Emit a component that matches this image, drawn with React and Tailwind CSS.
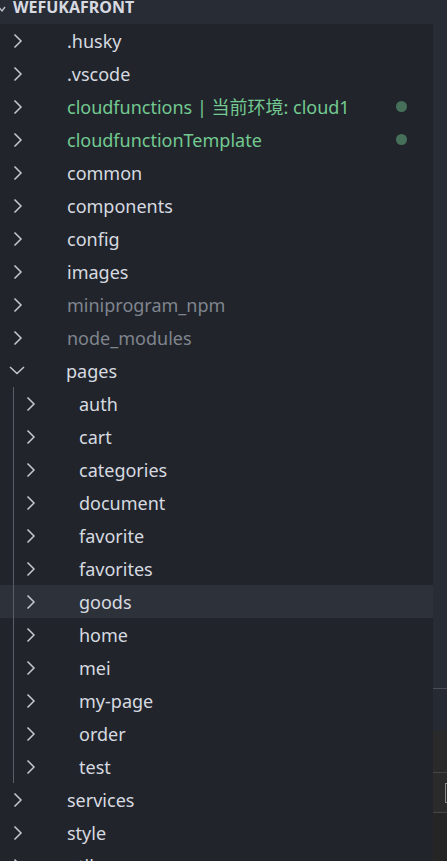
import { Fragment } from 'react';

const FONT = { fontFamily: '"Noto Sans", "Noto Sans CJK SC", sans-serif' };

const rows = [
  { name: '.husky' },
  { name: '.vscode' },
  { name: 'cloudfunctions | 当前环境: cloud1', tone: 'green', dot: true },
  { name: 'cloudfunctionTemplate', tone: 'green', dot: true },
  { name: 'common' },
  { name: 'components' },
  { name: 'config' },
  { name: 'images' },
  { name: 'miniprogram_npm', tone: 'dim' },
  { name: 'node_modules', tone: 'dim' },
  { name: 'pages', open: true },
  { name: 'auth', child: true },
  { name: 'cart', child: true },
  { name: 'categories', child: true },
  { name: 'document', child: true },
  { name: 'favorite', child: true },
  { name: 'favorites', child: true },
  { name: 'goods', child: true, hover: true },
  { name: 'home', child: true },
  { name: 'mei', child: true },
  { name: 'my-page', child: true },
  { name: 'order', child: true },
  { name: 'test', child: true },
  { name: 'services' },
  { name: 'style' },
  { name: 'utils' },
];

function ChevronRight() {
  return (
    <svg width="10" height="16" viewBox="0 0 10 16" fill="none">
      <path d="M1.5 1.5 L8 8 L1.5 14.5" stroke="#c5c8ce" strokeWidth="1.5" />
    </svg>
  );
}

function ChevronDown() {
  return (
    <svg width="16" height="9" viewBox="0 0 16 9" fill="none">
      <path d="M1 1 L8 7.5 L15 1" stroke="#c5c8ce" strokeWidth="1.5" />
    </svg>
  );
}

function Row({ row }) {
  const color =
    row.tone === 'green' ? 'text-[#73c991]' : row.tone === 'dim' ? 'text-[#7f848e]' : 'text-[#d7dae0]';
  return (
    <div className={`relative flex h-[33px] items-center ${row.hover ? 'bg-[#2c313a]' : ''}`}>
      {row.child && <div className="absolute left-[13px] top-0 h-full w-px bg-[#5a5e66]" />}
      <div className={`flex w-[16px] items-center justify-center ${row.child ? 'ml-[23px]' : row.open ? 'ml-[9px]' : 'ml-[10px]'}`}>
        {row.open ? <ChevronDown /> : <ChevronRight />}
      </div>
      <span className={`mt-[2px] whitespace-nowrap text-[18px] ${color} ${row.child ? 'ml-[40px]' : 'ml-[41px]'}`}>
        {row.name}
      </span>
      {row.dot && <div className="ml-auto mr-[26px] h-[11px] w-[11px] rounded-full bg-[#46705a]" />}
    </div>
  );
}

export default function App() {
  return (
    <div className="flex h-[861px] w-[447px] flex-col overflow-hidden bg-[#21252b]" style={FONT}>
      <div className="flex h-[24px] shrink-0 items-start overflow-hidden bg-[#282c34]">
        <svg width="6" height="8" viewBox="0 0 6 8" className="mt-[5px]">
          <path d="M-2 1 L2 6 L5 2" stroke="#c5c8ce" strokeWidth="1.3" fill="none" />
        </svg>
        <span className="ml-[7px] mt-[-3px] text-[16px] font-bold leading-[20px] text-[#d7dae0]">WEFUKAFRONT</span>
      </div>
      <div className="flex flex-1">
        <div className="w-[433px] overflow-hidden">
          {rows.map((row) => (
            <Fragment key={row.name}>
              <Row row={row} />
            </Fragment>
          ))}
        </div>
        <div className="flex w-[14px] flex-col">
          <div className="h-[664px] bg-[#282c34]" />
          <div className="h-px bg-[#4b4e55]" />
          <div className="h-[42px] bg-[#262a33]" />
          <div className="h-[42px] border-b border-[#464646] bg-[#2a2a2a]" />
          <div className="relative h-[40px] border-b border-[#464646] bg-[#2b2b2b]">
            <div className="absolute left-[12px] top-[10px] h-[20px] w-[4px] border border-[#8a8a8a]" />
          </div>
          <div className="flex-1 bg-[#252525]" />
        </div>
      </div>
    </div>
  );
}
